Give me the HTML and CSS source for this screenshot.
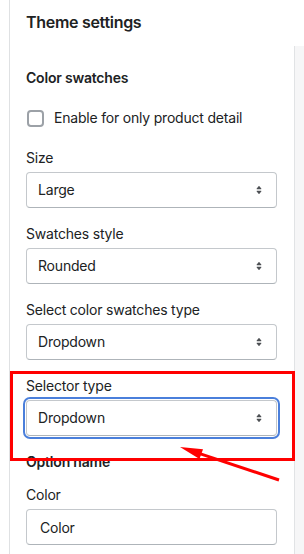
FILE: index.html
```html
<!DOCTYPE html>
<html lang="en">
<head>
  <meta charset="utf-8">
  <title>Theme settings</title>
  <link rel="stylesheet" href="styles.css">
</head>
<body>
<div class="app">
  <div class="shell">
    <div class="header">
      <h1>Theme settings</h1>
    </div>
    <div class="main">
      <div class="sidebar">
        <h2>Color swatches</h2>
        <label class="check">
          <span class="box"></span>
          <span>Enable for only product detail</span>
        </label>

        <div class="field">
          <div class="label">Size</div>
          <div class="select">
            <span>Large</span>
            <svg viewBox="0 0 20 20"><path d="M7.676 9h4.648c.563 0 .879-.603.53-1.014l-2.323-2.746a.708.708 0 0 0-1.062 0l-2.324 2.746c-.347.411-.032 1.014.531 1.014Zm4.648 2h-4.648c-.563 0-.878.603-.53 1.014l2.323 2.746c.27.32.792.32 1.062 0l2.323-2.746c.349-.411.033-1.014-.53-1.014Z"/></svg>
          </div>
        </div>

        <div class="field">
          <div class="label">Swatches style</div>
          <div class="select">
            <span>Rounded</span>
            <svg viewBox="0 0 20 20"><path d="M7.676 9h4.648c.563 0 .879-.603.53-1.014l-2.323-2.746a.708.708 0 0 0-1.062 0l-2.324 2.746c-.347.411-.032 1.014.531 1.014Zm4.648 2h-4.648c-.563 0-.878.603-.53 1.014l2.323 2.746c.27.32.792.32 1.062 0l2.323-2.746c.349-.411.033-1.014-.53-1.014Z"/></svg>
          </div>
        </div>

        <div class="field">
          <div class="label">Select color swatches type</div>
          <div class="select">
            <span>Dropdown</span>
            <svg viewBox="0 0 20 20"><path d="M7.676 9h4.648c.563 0 .879-.603.53-1.014l-2.323-2.746a.708.708 0 0 0-1.062 0l-2.324 2.746c-.347.411-.032 1.014.531 1.014Zm4.648 2h-4.648c-.563 0-.878.603-.53 1.014l2.323 2.746c.27.32.792.32 1.062 0l2.323-2.746c.349-.411.033-1.014-.53-1.014Z"/></svg>
          </div>
        </div>

        <div class="field">
          <div class="label">Selector type</div>
          <div class="select focused">
            <span>Dropdown</span>
            <svg viewBox="0 0 20 20"><path d="M7.676 9h4.648c.563 0 .879-.603.53-1.014l-2.323-2.746a.708.708 0 0 0-1.062 0l-2.324 2.746c-.347.411-.032 1.014.531 1.014Zm4.648 2h-4.648c-.563 0-.878.603-.53 1.014l2.323 2.746c.27.32.792.32 1.062 0l2.323-2.746c.349-.411.033-1.014-.53-1.014Z"/></svg>
          </div>
        </div>

        <h2 class="section">Option name</h2>
        <div class="field tight">
          <div class="label">Color</div>
          <input class="text" type="text" value="Color">
        </div>
      </div>
      <div class="preview"></div>
    </div>
  </div>

  <!-- annotation drawn over the screenshot -->
  <svg class="marks" viewBox="0 0 304 554">
    <rect x="11.5" y="372.5" width="282" height="87" fill="none" stroke="#ff0000" stroke-width="3"/>
    <line x1="279" y1="480" x2="196" y2="452.3" stroke="#ff0000" stroke-width="3"/>
    <polygon points="180,447 203,449.3 199.5,459" fill="#ff0000"/>
  </svg>
</div>
</body>
</html>
```

FILE: styles.css
```css
* {
  box-sizing: border-box;
}
body {
  margin: 0;
  background: #fff;
  color: #202223;
  font: 14px/20px "Inter", "Noto Sans", sans-serif;
  letter-spacing: -0.2px;
}
.app {
  position: relative;
  width: 304px;
  height: 554px;
  overflow: hidden;
}
.shell {
  margin-left: 9px;
  border-left: 1px solid #dfe1e3;
  height: 554px;
  display: flex;
  flex-direction: column;
}
.header {
  height: 46px;
  padding: 10px 16px 0;
}
h1 {
  margin: 0;
  font-size: 16px;
  line-height: 24px;
  font-weight: 600;
  letter-spacing: -0.3px;
}
.main {
  flex: 1;
  display: flex;
}
.sidebar {
  width: 284px;
  padding: 22px 17px 0 16px;
}
.preview {
  flex: 1;
  background: #f6f6f7;
  border-left: 1px solid #e1e3e5;
}
h2 {
  margin: 0;
  font-size: 14px;
  line-height: 20px;
  font-weight: 600;
}
h2.section {
  margin-top: 16px;
}
.check {
  display: flex;
  align-items: center;
  margin-top: 20px;
}
.check .box {
  width: 17px;
  height: 17px;
  margin: 0 10px 0 1px;
  border: 2px solid #9ca1a7;
  border-radius: 4px;
  background: #fff;
}
.field {
  margin-top: 16px;
}
.check + .field {
  margin-top: 20px;
}
.field.tight {
  margin-top: 13px;
}
.label {
  margin-bottom: 4px;
}
.select {
  height: 36px;
  display: flex;
  align-items: center;
  justify-content: space-between;
  padding: 0 9px 0 11px;
  border: 1px solid #c4c8cc;
  border-bottom-color: #aeb4b9;
  border-radius: 4px;
  background: #fff;
}
.select svg {
  width: 16px;
  height: 16px;
  fill: #4d5054;
}
.select.focused {
  box-shadow: 0 0 0 1px #fff, 0 0 0 3px #4a7fdb;
}
.text {
  display: block;
  width: 100%;
  height: 36px;
  margin: 0;
  padding: 0 13px;
  border: 1px solid #c4c8cc;
  border-bottom-color: #aeb4b9;
  border-radius: 4px;
  background: #fff;
  color: #202223;
  font: inherit;
  letter-spacing: inherit;
}
.marks {
  position: absolute;
  top: 0;
  left: 0;
  width: 304px;
  height: 554px;
  pointer-events: none;
}
```
